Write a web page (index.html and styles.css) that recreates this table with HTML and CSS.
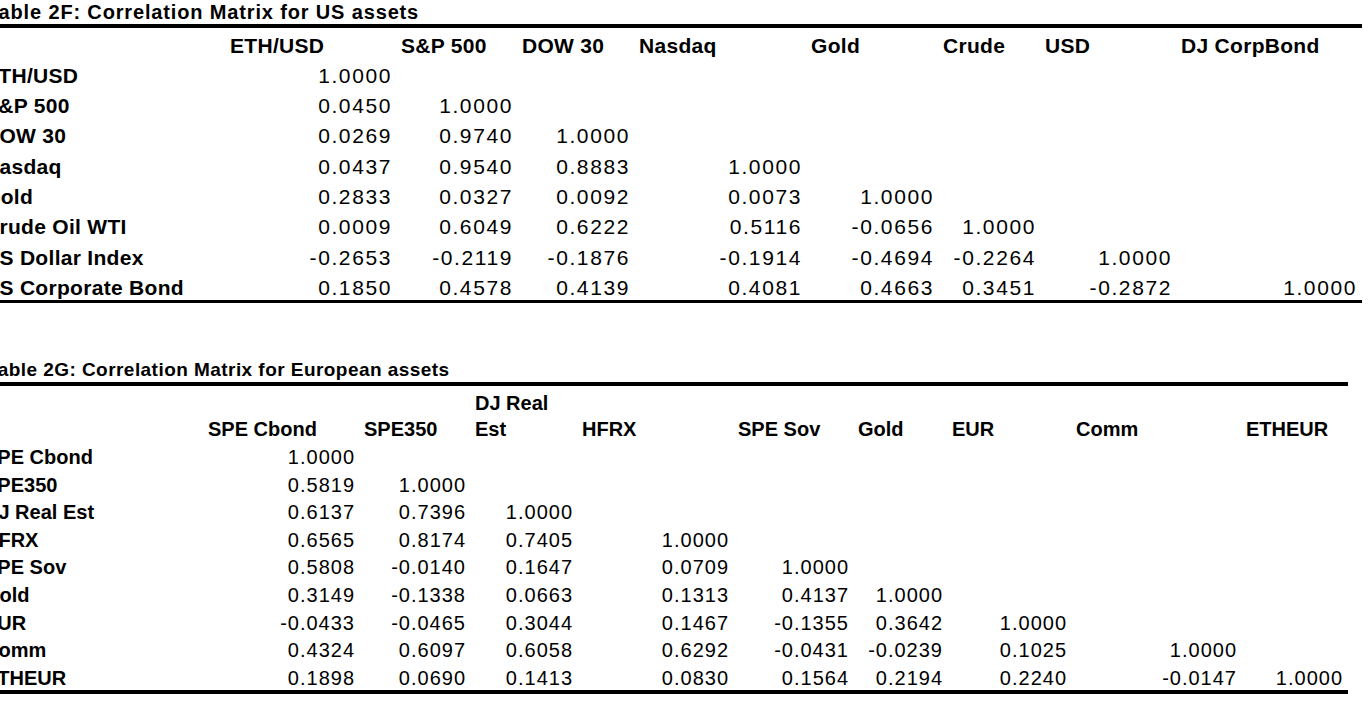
FILE: index.html
```html
<!DOCTYPE html>
<html lang="en">
<head>
<meta charset="utf-8">
<title>Correlation Matrices</title>
<link rel="stylesheet" href="styles.css">
</head>
<body>
<div class="page">
  <section class="block us">
    <h2 class="title">Table 2F: Correlation Matrix for US assets</h2>
    <table class="matrix">
      <colgroup>
        <col class="c-label"><col class="c1"><col class="c2"><col class="c3"><col class="c4"><col class="c5"><col class="c6"><col class="c7"><col class="c8">
      </colgroup>
      <thead>
        <tr><th></th><th>ETH/USD</th><th>S&amp;P 500</th><th>DOW 30</th><th>Nasdaq</th><th>Gold</th><th>Crude</th><th>USD</th><th>DJ CorpBond</th></tr>
      </thead>
      <tbody>
        <tr><th>ETH/USD</th><td>1.0000</td><td></td><td></td><td></td><td></td><td></td><td></td><td></td></tr>
        <tr><th>S&amp;P 500</th><td>0.0450</td><td>1.0000</td><td></td><td></td><td></td><td></td><td></td><td></td></tr>
        <tr><th>DOW 30</th><td>0.0269</td><td>0.9740</td><td>1.0000</td><td></td><td></td><td></td><td></td><td></td></tr>
        <tr><th>Nasdaq</th><td>0.0437</td><td>0.9540</td><td>0.8883</td><td>1.0000</td><td></td><td></td><td></td><td></td></tr>
        <tr><th>Gold</th><td>0.2833</td><td>0.0327</td><td>0.0092</td><td>0.0073</td><td>1.0000</td><td></td><td></td><td></td></tr>
        <tr><th>Crude Oil WTI</th><td>0.0009</td><td>0.6049</td><td>0.6222</td><td>0.5116</td><td>-0.0656</td><td>1.0000</td><td></td><td></td></tr>
        <tr><th>US Dollar Index</th><td>-0.2653</td><td>-0.2119</td><td>-0.1876</td><td>-0.1914</td><td>-0.4694</td><td>-0.2264</td><td>1.0000</td><td></td></tr>
        <tr><th>US Corporate Bond</th><td>0.1850</td><td>0.4578</td><td>0.4139</td><td>0.4081</td><td>0.4663</td><td>0.3451</td><td>-0.2872</td><td>1.0000</td></tr>
      </tbody>
    </table>
  </section>

  <section class="block eu">
    <h2 class="title">Table 2G: Correlation Matrix for European assets</h2>
    <table class="matrix">
      <colgroup>
        <col class="c-label"><col class="c1"><col class="c2"><col class="c3"><col class="c4"><col class="c5"><col class="c6"><col class="c7"><col class="c8"><col class="c9">
      </colgroup>
      <thead>
        <tr><th></th><th>SPE Cbond</th><th>SPE350</th><th>DJ Real<br>Est</th><th>HFRX</th><th>SPE Sov</th><th>Gold</th><th>EUR</th><th>Comm</th><th>ETHEUR</th></tr>
      </thead>
      <tbody>
        <tr><th>SPE Cbond</th><td>1.0000</td><td></td><td></td><td></td><td></td><td></td><td></td><td></td><td></td></tr>
        <tr><th>SPE350</th><td>0.5819</td><td>1.0000</td><td></td><td></td><td></td><td></td><td></td><td></td><td></td></tr>
        <tr><th>DJ Real Est</th><td>0.6137</td><td>0.7396</td><td>1.0000</td><td></td><td></td><td></td><td></td><td></td><td></td></tr>
        <tr><th>HFRX</th><td>0.6565</td><td>0.8174</td><td>0.7405</td><td>1.0000</td><td></td><td></td><td></td><td></td><td></td></tr>
        <tr><th>SPE Sov</th><td>0.5808</td><td>-0.0140</td><td>0.1647</td><td>0.0709</td><td>1.0000</td><td></td><td></td><td></td><td></td></tr>
        <tr><th>Gold</th><td>0.3149</td><td>-0.1338</td><td>0.0663</td><td>0.1313</td><td>0.4137</td><td>1.0000</td><td></td><td></td><td></td></tr>
        <tr><th>EUR</th><td>-0.0433</td><td>-0.0465</td><td>0.3044</td><td>0.1467</td><td>-0.1355</td><td>0.3642</td><td>1.0000</td><td></td><td></td></tr>
        <tr><th>Comm</th><td>0.4324</td><td>0.6097</td><td>0.6058</td><td>0.6292</td><td>-0.0431</td><td>-0.0239</td><td>0.1025</td><td>1.0000</td><td></td></tr>
        <tr><th>ETHEUR</th><td>0.1898</td><td>0.0690</td><td>0.1413</td><td>0.0830</td><td>0.1564</td><td>0.2194</td><td>0.2240</td><td>-0.0147</td><td>1.0000</td></tr>
      </tbody>
    </table>
  </section>
</div>
</body>
</html>
```

FILE: styles.css
```css
html, body {
  margin: 0;
  padding: 0;
  background: #ffffff;
  overflow: hidden;
}

body {
  font-family: "Liberation Sans", Arial, Helvetica, sans-serif;
  color: #000;
}

.page {
  margin-left: -14px;
  width: 1376px;
}

.title {
  margin: 0;
  font-weight: bold;
  white-space: nowrap;
}

.matrix {
  table-layout: fixed;
  border-collapse: separate;
  border-spacing: 0;
  border-top: 4px solid #000;
}

.matrix th,
.matrix td {
  padding: 0;
  white-space: nowrap;
  overflow: visible;
}

.matrix th {
  font-weight: bold;
  text-align: left;
}

.matrix thead th {
  padding-left: 4px;
}

.matrix thead th:first-child,
.matrix tbody th {
  padding-left: 0;
}

.matrix tbody th {
  text-indent: -2px;
}

.matrix td {
  text-align: right;
  font-weight: normal;
  padding-right: 5px;
}

/* ---------- US table ---------- */
.us .title {
  font-size: 20px;
  line-height: 24px;
  letter-spacing: 0.85px;
  padding-left: 1px;
}

.us .matrix {
  width: 1376px;
  border-bottom: 3px solid #000;
  font-size: 21px;
  letter-spacing: 0.3px;
}

.us .matrix td {
  letter-spacing: 1.6px;
}

.us .matrix th,
.us .matrix td {
  line-height: 24px;
}

.us .matrix thead th {
  padding-top: 5.65px;
  padding-bottom: 3.15px;
}

.us .matrix tbody th,
.us .matrix tbody td {
  padding-top: 3.15px;
  padding-bottom: 3.15px;
}

.us .matrix tbody tr:last-child th,
.us .matrix tbody tr:last-child td {
  padding-bottom: 0;
}

.us .c-label { width: 240px; }
.us .c1 { width: 171px; }
.us .c2 { width: 121px; }
.us .c3 { width: 117px; }
.us .c4 { width: 172px; }
.us .c5 { width: 132px; }
.us .c6 { width: 102px; }
.us .c7 { width: 136px; }
.us .c8 { width: 185px; }

/* ---------- European table ---------- */
.eu {
  margin-top: 55px;
}

.eu .title {
  font-size: 19px;
  line-height: 24px;
  letter-spacing: 0.45px;
  padding-left: 1px;
}

.eu .matrix {
  width: 1362px;
  border-bottom: 4px solid #000;
  font-size: 20px;
  letter-spacing: 0;
}

.eu .matrix td {
  letter-spacing: 1px;
}

.eu .matrix thead th {
  line-height: 25.7px;
  vertical-align: bottom;
  padding-top: 5.2px;
  padding-bottom: 0.7px;
}

.eu .matrix tbody th,
.eu .matrix tbody td {
  line-height: 24px;
  padding-top: 1.8px;
  padding-bottom: 1.8px;
}

.eu .matrix tbody tr:last-child th,
.eu .matrix tbody tr:last-child td {
  padding-bottom: 0;
}

.eu .c-label { width: 218px; }
.eu .c1 { width: 156px; }
.eu .c2 { width: 111px; }
.eu .c3 { width: 107px; }
.eu .c4 { width: 156px; }
.eu .c5 { width: 120px; }
.eu .c6 { width: 94px; }
.eu .c7 { width: 124px; }
.eu .c8 { width: 170px; }
.eu .c9 { width: 106px; }
```
